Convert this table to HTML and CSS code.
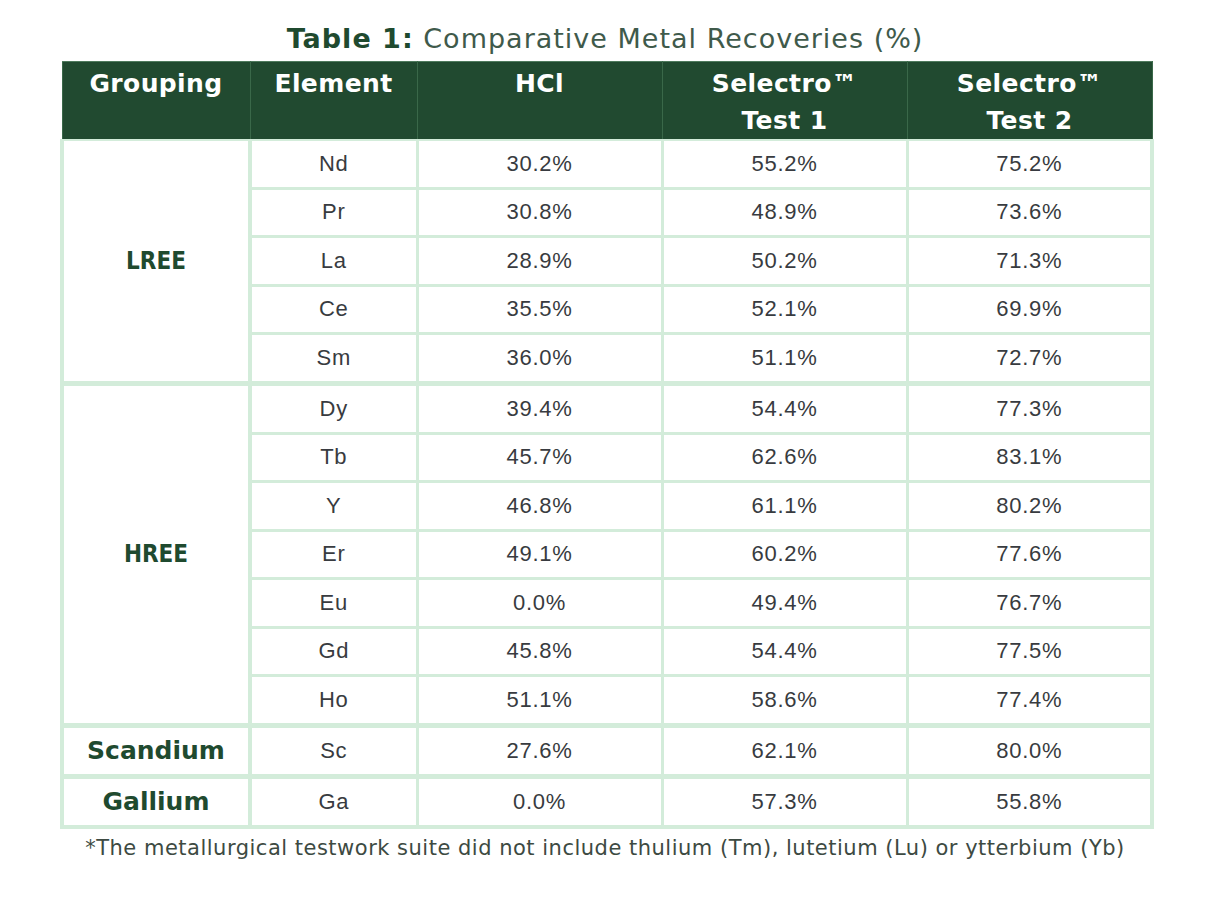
FILE: index.html
```html
<!DOCTYPE html>
<html lang="en">
<head>
<meta charset="utf-8">
<title>Table 1: Comparative Metal Recoveries (%)</title>
<link rel="stylesheet" href="styles.css">
</head>
<body>
<div class="page">
  <h1 class="title"><b>Table 1:</b> Comparative Metal Recoveries (%)</h1>
  <table class="rec">
    <colgroup>
      <col class="c-group"><col class="c-el"><col class="c-val"><col class="c-val"><col class="c-val">
    </colgroup>
    <thead>
      <tr>
        <th>Grouping</th>
        <th>Element</th>
        <th>HCl</th>
        <th>Selectro™<br>Test 1</th>
        <th>Selectro™<br>Test 2</th>
      </tr>
    </thead>
    <tbody>
      <tr><td class="grp sans" rowspan="5">LREE</td><td>Nd</td><td>30.2%</td><td>55.2%</td><td>75.2%</td></tr>
      <tr><td>Pr</td><td>30.8%</td><td>48.9%</td><td>73.6%</td></tr>
      <tr><td>La</td><td>28.9%</td><td>50.2%</td><td>71.3%</td></tr>
      <tr><td>Ce</td><td>35.5%</td><td>52.1%</td><td>69.9%</td></tr>
      <tr><td>Sm</td><td>36.0%</td><td>51.1%</td><td>72.7%</td></tr>
      <tr class="gstart"><td class="grp sans" rowspan="7">HREE</td><td>Dy</td><td>39.4%</td><td>54.4%</td><td>77.3%</td></tr>
      <tr><td>Tb</td><td>45.7%</td><td>62.6%</td><td>83.1%</td></tr>
      <tr><td>Y</td><td>46.8%</td><td>61.1%</td><td>80.2%</td></tr>
      <tr><td>Er</td><td>49.1%</td><td>60.2%</td><td>77.6%</td></tr>
      <tr><td>Eu</td><td>0.0%</td><td>49.4%</td><td>76.7%</td></tr>
      <tr><td>Gd</td><td>45.8%</td><td>54.4%</td><td>77.5%</td></tr>
      <tr><td>Ho</td><td>51.1%</td><td>58.6%</td><td>77.4%</td></tr>
      <tr class="gstart"><td class="grp gothic">Scandium</td><td>Sc</td><td>27.6%</td><td>62.1%</td><td>80.0%</td></tr>
      <tr class="gstart"><td class="grp gothic">Gallium</td><td>Ga</td><td>0.0%</td><td>57.3%</td><td>55.8%</td></tr>
    </tbody>
  </table>
  <p class="note">*The metallurgical testwork suite did not include thulium (Tm), lutetium (Lu) or ytterbium (Yb)</p>
</div>
</body>
</html>
```

FILE: styles.css
```css
html, body {
  margin: 0;
  padding: 0;
  background: #ffffff;
}

.page {
  width: 1090px;
  margin: 0 0 0 60px;
  padding-top: 22px;
}

.title {
  margin: 0 0 5px 0;
  text-align: center;
  font-family: "DejaVu Sans", sans-serif;
  font-weight: normal;
  font-size: 27px;
  letter-spacing: 1px;
  line-height: 34px;
  color: #3f5a4b;
}

.title b {
  color: #1f4a2f;
  font-weight: bold;
}

.rec {
  width: 1090px;
  border-collapse: collapse;
  table-layout: fixed;
}

.c-group { width: 188px; }
.c-el { width: 167px; }
.c-val { width: 245px; }

.rec th {
  background: #214a30;
  color: #ffffff;
  font-family: "DejaVu Sans", sans-serif;
  font-weight: bold;
  font-size: 25px;
  letter-spacing: 0.4px;
  line-height: 37px;
  height: 67px;
  padding: 3px 0 0 0;
  vertical-align: top;
  text-align: center;
  border: 1px solid #3a6849;
  border-top-color: #4f7a5d;
}

.rec td {
  height: 45.5px;
  padding: 0;
  text-align: center;
  vertical-align: middle;
  font-family: "Liberation Sans", Arial, sans-serif;
  font-size: 22px;
  letter-spacing: 0.7px;
  color: #383b40;
  border: 3px solid #d3ecda;
}

.rec tbody tr:first-child td {
  border-top: 2px solid #d3ecda;
}

.rec td:first-child {
  border-left: 4px solid #d3ecda;
}

.rec td:last-child {
  border-right: 4px solid #d3ecda;
}

.rec tbody tr:last-child td {
  border-bottom: 4px solid #d3ecda;
}

.rec td.grp {
  border-right-width: 4px;
  color: #1f4a2f;
  font-weight: bold;
  letter-spacing: 0;
}

.rec tr.gstart td {
  border-top: 5px solid #d3ecda;
  height: 46px;
}

.grp.sans {
  font-family: "DejaVu Sans Condensed", "DejaVu Sans", sans-serif;
  font-size: 24px;
}

.grp.gothic {
  font-family: "DejaVu Sans", sans-serif;
  font-size: 25px;
  letter-spacing: 0.4px;
}

.note {
  margin: 4px 0 0 0;
  text-align: center;
  font-family: "DejaVu Sans", sans-serif;
  font-size: 21px;
  letter-spacing: 0.5px;
  line-height: 30px;
  color: #3d4a42;
}
```
